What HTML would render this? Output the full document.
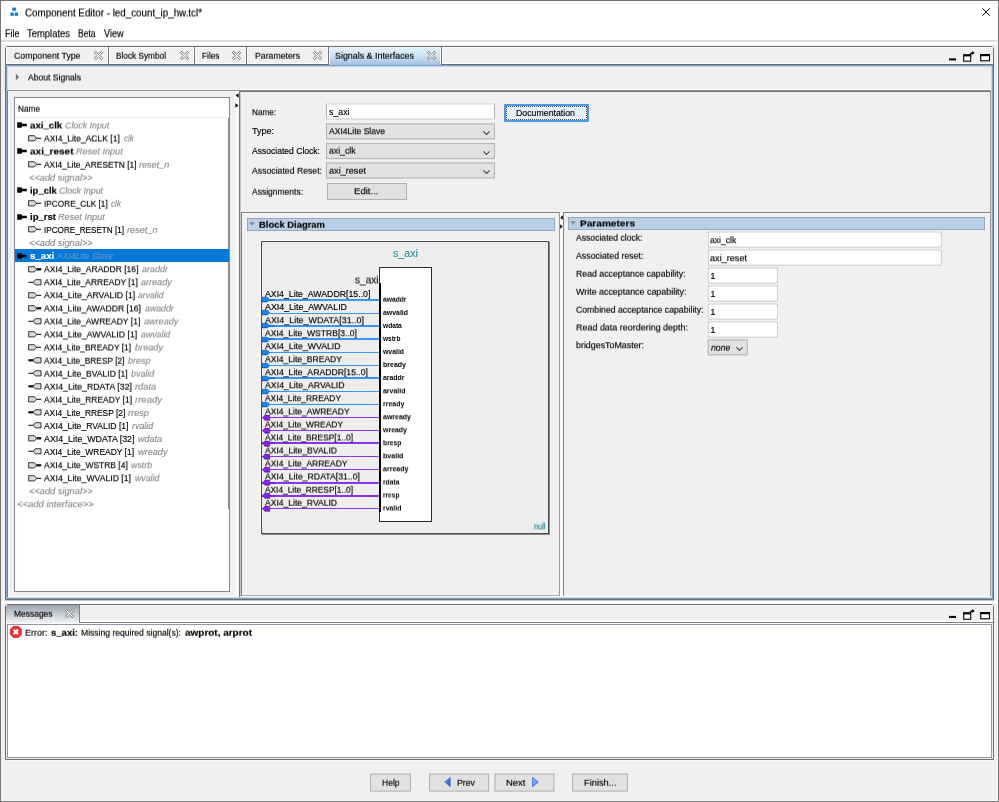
<!DOCTYPE html>
<html lang="en"><head><meta charset="utf-8"><title>Component Editor - led_count_ip_hw.tcl*</title>
<style>
html,body{margin:0;padding:0;}
body{width:999px;height:802px;overflow:hidden;background:#f0f0f0;font-family:"Liberation Sans",sans-serif;}
#win{position:relative;width:999px;height:802px;overflow:hidden;background:#f0f0f0;}
.a{position:absolute;}
.t{position:absolute;white-space:pre;line-height:14px;height:14px;font-size:9.4px;-webkit-text-stroke:0.16px currentColor;}
svg{position:absolute;overflow:visible;}
.tl{position:absolute;left:0;top:0;width:999px;height:802px;pointer-events:none;}

</style></head>
<body>
<div id="win">
<div class="a" style="left:0px;top:0px;width:999px;height:802px;background:#f0f0f0;"></div>
<div class="a" style="left:1px;top:1px;width:997px;height:40px;background:#ffffff;"></div>
<div class="a" style="left:1px;top:40px;width:997px;height:1px;background:#d9d9d9;"></div>
<div class="a" style="left:1px;top:41px;width:997px;height:1px;background:#e2e2e2;"></div>
<div class="a" style="left:1px;top:42px;width:997px;height:2px;background:#ffffff;"></div>
<div class="a" style="left:1px;top:44px;width:997px;height:1px;background:#f7f7f7;"></div>
<svg style="left:9.5px;top:7.3px" width="9" height="10" viewBox="0 0 9 10"><rect x="2.3" y="0.6" width="3.6" height="3" fill="#0a78d7"/><path d="M3 3.4 L5.4 3.4 L4.2 4.8 Z" fill="#0a78d7"/><rect x="0.5" y="5.6" width="3.3" height="3.2" fill="#0a78d7"/><rect x="4.7" y="5.6" width="3.3" height="3.2" fill="#0a78d7"/></svg>
<svg style="left:981px;top:7px" width="10" height="10" viewBox="0 0 10 10"><path d="M1.3 1.2 L8.9 8.8 M8.9 1.2 L1.3 8.8" stroke="#111" stroke-width="1.0" fill="none"/></svg>
<div class="a" style="left:5px;top:46px;width:989px;height:554px;border:1px solid #6e6e6e;box-sizing:border-box;border-radius:3px 3px 0 0;"></div>
<div class="a" style="left:6px;top:47px;width:987px;height:17px;background:#f0f0f0;"></div>
<div class="a" style="left:6px;top:47px;width:987px;height:1px;background:#fafafa;"></div>
<div class="a" style="left:6px;top:63px;width:987px;height:1px;background:#ffffff;"></div>
<div class="a" style="left:6px;top:64px;width:987px;height:1px;background:#6e6e6e;"></div>
<div class="a" style="left:329px;top:47px;width:112px;height:19px;background:linear-gradient(#e6f5fd,#cfe3f5 45%,#9ebde1);"></div>
<div class="a" style="left:107px;top:48px;width:1px;height:16px;background:#fbfbfb;"></div>
<div class="a" style="left:108px;top:47px;width:1px;height:17px;background:#757575;"></div>
<div class="a" style="left:109px;top:48px;width:1px;height:16px;background:#fbfbfb;"></div>
<div class="a" style="left:193px;top:48px;width:1px;height:16px;background:#fbfbfb;"></div>
<div class="a" style="left:194px;top:47px;width:1px;height:17px;background:#757575;"></div>
<div class="a" style="left:195px;top:48px;width:1px;height:16px;background:#fbfbfb;"></div>
<div class="a" style="left:245px;top:48px;width:1px;height:16px;background:#fbfbfb;"></div>
<div class="a" style="left:246px;top:47px;width:1px;height:17px;background:#757575;"></div>
<div class="a" style="left:247px;top:48px;width:1px;height:16px;background:#fbfbfb;"></div>
<div class="a" style="left:327px;top:48px;width:1px;height:16px;background:#fbfbfb;"></div>
<div class="a" style="left:328px;top:47px;width:1px;height:17px;background:#757575;"></div>
<div class="a" style="left:329px;top:48px;width:1px;height:16px;background:#fbfbfb;"></div>
<div class="a" style="left:440px;top:48px;width:1px;height:16px;background:#fbfbfb;"></div>
<div class="a" style="left:441px;top:47px;width:1px;height:17px;background:#757575;"></div>
<div class="a" style="left:442px;top:48px;width:1px;height:16px;background:#fbfbfb;"></div>
<div class="a" style="left:6px;top:48px;width:1px;height:16px;background:#fbfbfb;"></div>
<div class="a" style="left:6px;top:65px;width:987px;height:534px;border:1px solid #7da2ce;box-sizing:border-box;"></div>
<div class="a" style="left:7px;top:66px;width:985px;height:532px;border:1px solid #c4d6ea;box-sizing:border-box;"></div>
<svg style="left:93.5px;top:51.1px" width="9" height="9" viewBox="0 0 9 9"><path d="M1.6 0.4 L4.5 3 L7.4 0.4 L8.6 1.6 L6 4.5 L8.6 7.4 L7.4 8.6 L4.5 6 L1.6 8.6 L0.4 7.4 L3 4.5 L0.4 1.6 Z" fill="#ffffff" stroke="#6e6e6e" stroke-width="1.0" stroke-linejoin="round"/></svg>
<svg style="left:179.5px;top:51.1px" width="9" height="9" viewBox="0 0 9 9"><path d="M1.6 0.4 L4.5 3 L7.4 0.4 L8.6 1.6 L6 4.5 L8.6 7.4 L7.4 8.6 L4.5 6 L1.6 8.6 L0.4 7.4 L3 4.5 L0.4 1.6 Z" fill="#ffffff" stroke="#6e6e6e" stroke-width="1.0" stroke-linejoin="round"/></svg>
<svg style="left:231.8px;top:51.1px" width="9" height="9" viewBox="0 0 9 9"><path d="M1.6 0.4 L4.5 3 L7.4 0.4 L8.6 1.6 L6 4.5 L8.6 7.4 L7.4 8.6 L4.5 6 L1.6 8.6 L0.4 7.4 L3 4.5 L0.4 1.6 Z" fill="#ffffff" stroke="#6e6e6e" stroke-width="1.0" stroke-linejoin="round"/></svg>
<svg style="left:312.8px;top:51.1px" width="9" height="9" viewBox="0 0 9 9"><path d="M1.6 0.4 L4.5 3 L7.4 0.4 L8.6 1.6 L6 4.5 L8.6 7.4 L7.4 8.6 L4.5 6 L1.6 8.6 L0.4 7.4 L3 4.5 L0.4 1.6 Z" fill="#ffffff" stroke="#6e6e6e" stroke-width="1.0" stroke-linejoin="round"/></svg>
<svg style="left:426.8px;top:51.1px" width="9" height="9" viewBox="0 0 9 9"><path d="M1.6 0.4 L4.5 3 L7.4 0.4 L8.6 1.6 L6 4.5 L8.6 7.4 L7.4 8.6 L4.5 6 L1.6 8.6 L0.4 7.4 L3 4.5 L0.4 1.6 Z" fill="#ffffff" stroke="#6e6e6e" stroke-width="1.0" stroke-linejoin="round"/></svg>
<div class="a" style="left:949px;top:58px;width:7px;height:2px;background:#000;transform:translate(0.00px,0.40px);"></div>
<svg style="left:963px;top:52px" width="13" height="11" viewBox="0 0 13 11"><rect x="0.7" y="3.0" width="7.0" height="6.2" fill="#fff" stroke="#000" stroke-width="1.1"/><rect x="0.2" y="2.4" width="8.0" height="2" fill="#000"/><path d="M7.1 3.3 Q7.3 1.1 9.4 1.05" stroke="#000" stroke-width="1.4" fill="none"/><path d="M9.2 -0.9 L11.7 1 L9.2 2.9 Z" fill="#000"/></svg>
<svg style="left:980px;top:54px" width="11" height="9" viewBox="0 0 11 9"><rect x="0.7" y="0.6" width="8.8" height="6.2" fill="#fff" stroke="#000" stroke-width="1.1"/><rect x="0.2" y="0.1" width="9.8" height="2.1" fill="#000"/></svg>
<svg style="left:15px;top:73px" width="5" height="8" viewBox="0 0 5 8"><path d="M0.8 0.6 L4.2 4 L0.8 7.4 Z" fill="#7a7a7a"/></svg>
<div class="a" style="left:8px;top:89px;width:983px;height:1px;background:#ffffff;"></div>
<div class="a" style="left:8px;top:90px;width:983px;height:1px;background:#8e8e8e;"></div>
<div class="a" style="left:7px;top:91px;width:1px;height:506px;background:#76828f;"></div>
<div class="a" style="left:8px;top:91px;width:1px;height:506px;background:#f6f6f6;"></div>
<div class="a" style="left:8px;top:91px;width:227px;height:1px;background:#fbfbfb;"></div>
<div class="a" style="left:990px;top:91px;width:1px;height:506px;background:#9a9a9a;"></div>
<div class="a" style="left:241px;top:595px;width:319px;height:1px;background:#adadad;"></div>
<div class="a" style="left:8px;top:596px;width:983px;height:1px;background:#fafafa;"></div>
<div class="a" style="left:14px;top:97px;width:216px;height:495px;background:#ffffff;border:1px solid #828790;box-sizing:border-box;"></div>
<div class="a" style="left:15px;top:117px;width:214px;height:1px;background:#ececec;"></div>
<div class="a" style="left:228px;top:118px;width:1px;height:391px;background:#868d98;"></div>
<div class="a" style="left:239px;top:91px;width:1px;height:506px;background:#72767d;"></div>
<div class="a" style="left:240px;top:91px;width:1px;height:506px;background:#c4c6c9;"></div>
<div class="a" style="left:239px;top:91px;width:752px;height:1px;background:#72767d;"></div>
<div class="a" style="left:235px;top:91px;width:4px;height:506px;background:#fafafa;"></div>
<svg style="left:235px;top:93px" width="4" height="5" viewBox="0 0 4 5"><path d="M3.6 0.2 L3.6 4.8 L0.6 2.5 Z" fill="#000"/></svg>
<svg style="left:235px;top:103px" width="4" height="5" viewBox="0 0 4 5"><path d="M0.4 0.2 L0.4 4.8 L3.4 2.5 Z" fill="#000"/></svg>
<svg style="left:17.0px;top:122.07px" width="10" height="6" viewBox="0 0 10 6"><path d="M0.2 0.2 L4.4 0.2 L6.2 3 L4.4 5.8 L0.2 5.8 Z" fill="#000"/><rect x="5.3" y="1.75" width="4.5" height="2.5" fill="#000"/></svg>
<svg style="left:27.5px;top:134.935px" width="14" height="7" viewBox="0 0 14 7"><path d="M0.6 0.7 L6.4 0.7 L8.6 3.3 L6.4 5.9 L0.6 5.9 Z" fill="#d9d9d9" stroke="#222" stroke-width="0.9"/><rect x="8.6" y="2.775" width="4.6" height="1.05" fill="#111"/></svg>
<svg style="left:17.0px;top:148.2px" width="10" height="6" viewBox="0 0 10 6"><path d="M0.2 0.2 L4.4 0.2 L6.2 3 L4.4 5.8 L0.2 5.8 Z" fill="#000"/><rect x="5.3" y="1.75" width="4.5" height="2.5" fill="#000"/></svg>
<svg style="left:27.5px;top:161.065px" width="14" height="7" viewBox="0 0 14 7"><path d="M0.6 0.7 L6.4 0.7 L8.6 3.3 L6.4 5.9 L0.6 5.9 Z" fill="#d9d9d9" stroke="#222" stroke-width="0.9"/><rect x="8.6" y="2.775" width="4.6" height="1.05" fill="#111"/></svg>
<svg style="left:17.0px;top:187.39499999999998px" width="10" height="6" viewBox="0 0 10 6"><path d="M0.2 0.2 L4.4 0.2 L6.2 3 L4.4 5.8 L0.2 5.8 Z" fill="#000"/><rect x="5.3" y="1.75" width="4.5" height="2.5" fill="#000"/></svg>
<svg style="left:27.5px;top:200.26px" width="14" height="7" viewBox="0 0 14 7"><path d="M0.6 0.7 L6.4 0.7 L8.6 3.3 L6.4 5.9 L0.6 5.9 Z" fill="#d9d9d9" stroke="#222" stroke-width="0.9"/><rect x="8.6" y="2.775" width="4.6" height="1.05" fill="#111"/></svg>
<svg style="left:17.0px;top:213.52499999999998px" width="10" height="6" viewBox="0 0 10 6"><path d="M0.2 0.2 L4.4 0.2 L6.2 3 L4.4 5.8 L0.2 5.8 Z" fill="#000"/><rect x="5.3" y="1.75" width="4.5" height="2.5" fill="#000"/></svg>
<svg style="left:27.5px;top:226.39px" width="14" height="7" viewBox="0 0 14 7"><path d="M0.6 0.7 L6.4 0.7 L8.6 3.3 L6.4 5.9 L0.6 5.9 Z" fill="#d9d9d9" stroke="#222" stroke-width="0.9"/><rect x="8.6" y="2.775" width="4.6" height="1.05" fill="#111"/></svg>
<div class="a" style="left:15px;top:249px;width:214px;height:13px;background:#0078d7;"></div>
<svg style="left:17.0px;top:252.72px" width="10" height="6" viewBox="0 0 10 6"><path d="M0.2 0.2 L4.4 0.2 L6.2 3 L4.4 5.8 L0.2 5.8 Z" fill="#000"/><rect x="5.3" y="1.75" width="4.5" height="2.5" fill="#000"/></svg>
<svg style="left:27.5px;top:265.585px" width="14" height="7" viewBox="0 0 14 7"><path d="M0.6 0.7 L6.4 0.7 L8.6 3.3 L6.4 5.9 L0.6 5.9 Z" fill="#d9d9d9" stroke="#222" stroke-width="0.9"/><rect x="8.6" y="2.15" width="4.6" height="2.3" fill="#111"/></svg>
<svg style="left:27.5px;top:278.65000000000003px" width="14" height="7" viewBox="0 0 14 7"><rect x="0.4" y="2.775" width="5" height="1.05" fill="#111"/><path d="M13 0.7 L7.4 0.7 L5.2 3.3 L7.4 5.9 L13 5.9 Z" fill="#d9d9d9" stroke="#222" stroke-width="0.9"/></svg>
<svg style="left:27.5px;top:291.715px" width="14" height="7" viewBox="0 0 14 7"><path d="M0.6 0.7 L6.4 0.7 L8.6 3.3 L6.4 5.9 L0.6 5.9 Z" fill="#d9d9d9" stroke="#222" stroke-width="0.9"/><rect x="8.6" y="2.775" width="4.6" height="1.05" fill="#111"/></svg>
<svg style="left:27.5px;top:304.78000000000003px" width="14" height="7" viewBox="0 0 14 7"><path d="M0.6 0.7 L6.4 0.7 L8.6 3.3 L6.4 5.9 L0.6 5.9 Z" fill="#d9d9d9" stroke="#222" stroke-width="0.9"/><rect x="8.6" y="2.15" width="4.6" height="2.3" fill="#111"/></svg>
<svg style="left:27.5px;top:317.84499999999997px" width="14" height="7" viewBox="0 0 14 7"><rect x="0.4" y="2.775" width="5" height="1.05" fill="#111"/><path d="M13 0.7 L7.4 0.7 L5.2 3.3 L7.4 5.9 L13 5.9 Z" fill="#d9d9d9" stroke="#222" stroke-width="0.9"/></svg>
<svg style="left:27.5px;top:330.91px" width="14" height="7" viewBox="0 0 14 7"><path d="M0.6 0.7 L6.4 0.7 L8.6 3.3 L6.4 5.9 L0.6 5.9 Z" fill="#d9d9d9" stroke="#222" stroke-width="0.9"/><rect x="8.6" y="2.775" width="4.6" height="1.05" fill="#111"/></svg>
<svg style="left:27.5px;top:343.97499999999997px" width="14" height="7" viewBox="0 0 14 7"><path d="M0.6 0.7 L6.4 0.7 L8.6 3.3 L6.4 5.9 L0.6 5.9 Z" fill="#d9d9d9" stroke="#222" stroke-width="0.9"/><rect x="8.6" y="2.775" width="4.6" height="1.05" fill="#111"/></svg>
<svg style="left:27.5px;top:357.04px" width="14" height="7" viewBox="0 0 14 7"><rect x="0.4" y="2.15" width="5" height="2.3" fill="#111"/><path d="M13 0.7 L7.4 0.7 L5.2 3.3 L7.4 5.9 L13 5.9 Z" fill="#d9d9d9" stroke="#222" stroke-width="0.9"/></svg>
<svg style="left:27.5px;top:370.10499999999996px" width="14" height="7" viewBox="0 0 14 7"><rect x="0.4" y="2.775" width="5" height="1.05" fill="#111"/><path d="M13 0.7 L7.4 0.7 L5.2 3.3 L7.4 5.9 L13 5.9 Z" fill="#d9d9d9" stroke="#222" stroke-width="0.9"/></svg>
<svg style="left:27.5px;top:383.17px" width="14" height="7" viewBox="0 0 14 7"><rect x="0.4" y="2.15" width="5" height="2.3" fill="#111"/><path d="M13 0.7 L7.4 0.7 L5.2 3.3 L7.4 5.9 L13 5.9 Z" fill="#d9d9d9" stroke="#222" stroke-width="0.9"/></svg>
<svg style="left:27.5px;top:396.235px" width="14" height="7" viewBox="0 0 14 7"><path d="M0.6 0.7 L6.4 0.7 L8.6 3.3 L6.4 5.9 L0.6 5.9 Z" fill="#d9d9d9" stroke="#222" stroke-width="0.9"/><rect x="8.6" y="2.775" width="4.6" height="1.05" fill="#111"/></svg>
<svg style="left:27.5px;top:409.3px" width="14" height="7" viewBox="0 0 14 7"><rect x="0.4" y="2.15" width="5" height="2.3" fill="#111"/><path d="M13 0.7 L7.4 0.7 L5.2 3.3 L7.4 5.9 L13 5.9 Z" fill="#d9d9d9" stroke="#222" stroke-width="0.9"/></svg>
<svg style="left:27.5px;top:422.365px" width="14" height="7" viewBox="0 0 14 7"><rect x="0.4" y="2.775" width="5" height="1.05" fill="#111"/><path d="M13 0.7 L7.4 0.7 L5.2 3.3 L7.4 5.9 L13 5.9 Z" fill="#d9d9d9" stroke="#222" stroke-width="0.9"/></svg>
<svg style="left:27.5px;top:435.43px" width="14" height="7" viewBox="0 0 14 7"><path d="M0.6 0.7 L6.4 0.7 L8.6 3.3 L6.4 5.9 L0.6 5.9 Z" fill="#d9d9d9" stroke="#222" stroke-width="0.9"/><rect x="8.6" y="2.15" width="4.6" height="2.3" fill="#111"/></svg>
<svg style="left:27.5px;top:448.495px" width="14" height="7" viewBox="0 0 14 7"><rect x="0.4" y="2.775" width="5" height="1.05" fill="#111"/><path d="M13 0.7 L7.4 0.7 L5.2 3.3 L7.4 5.9 L13 5.9 Z" fill="#d9d9d9" stroke="#222" stroke-width="0.9"/></svg>
<svg style="left:27.5px;top:461.56px" width="14" height="7" viewBox="0 0 14 7"><path d="M0.6 0.7 L6.4 0.7 L8.6 3.3 L6.4 5.9 L0.6 5.9 Z" fill="#d9d9d9" stroke="#222" stroke-width="0.9"/><rect x="8.6" y="2.15" width="4.6" height="2.3" fill="#111"/></svg>
<svg style="left:27.5px;top:474.625px" width="14" height="7" viewBox="0 0 14 7"><path d="M0.6 0.7 L6.4 0.7 L8.6 3.3 L6.4 5.9 L0.6 5.9 Z" fill="#d9d9d9" stroke="#222" stroke-width="0.9"/><rect x="8.6" y="2.775" width="4.6" height="1.05" fill="#111"/></svg>
<div class="a" style="left:326px;top:103px;width:169px;height:16px;background:#ffffff;border:1px solid #adb1b9;box-sizing:border-box;border-bottom-color:#9da1a9;border-radius:1px;transform:translate(0.00px,0.50px);"></div>
<div class="a" style="left:326px;top:123px;width:169px;height:16px;background:#e1e1e1;border:1px solid #b2b2b2;box-sizing:border-box;transform:translate(0.00px,0.40px);"></div>
<svg style="left:482.9px;top:131.0px" width="7" height="4" viewBox="0 0 7 4"><path d="M0.4 0.4 L3.5 3.5 L6.6 0.4" fill="none" stroke="#454545" stroke-width="1.1"/></svg>
<div class="a" style="left:326px;top:143px;width:169px;height:16px;background:#e1e1e1;border:1px solid #b2b2b2;box-sizing:border-box;transform:translate(0.00px,0.10px);"></div>
<svg style="left:482.9px;top:150.7px" width="7" height="4" viewBox="0 0 7 4"><path d="M0.4 0.4 L3.5 3.5 L6.6 0.4" fill="none" stroke="#454545" stroke-width="1.1"/></svg>
<div class="a" style="left:326px;top:162px;width:169px;height:16px;background:#e1e1e1;border:1px solid #b2b2b2;box-sizing:border-box;transform:translate(0.00px,0.50px);"></div>
<svg style="left:482.9px;top:170.1px" width="7" height="4" viewBox="0 0 7 4"><path d="M0.4 0.4 L3.5 3.5 L6.6 0.4" fill="none" stroke="#454545" stroke-width="1.1"/></svg>
<div class="a" style="left:327px;top:182.5px;width:80px;height:17px;background:#e1e1e1;border:1px solid #b2b2b2;box-sizing:border-box;"></div>
<div class="a" style="left:504px;top:104px;width:85px;height:18px;background:#e5f1fb;border:2px solid #4a98e6;box-sizing:border-box;border-radius:1px;"></div>
<div class="a" style="left:506px;top:106px;width:81px;height:14px;border:1px dotted #4a4a4a;box-sizing:border-box;"></div>
<div class="a" style="left:241px;top:212px;width:319px;height:1px;background:#808080;"></div>
<div class="a" style="left:241px;top:212px;width:1px;height:384px;background:#808080;"></div>
<div class="a" style="left:559px;top:212px;width:1px;height:384px;background:#9a9a9a;"></div>
<div class="a" style="left:563px;top:212px;width:427px;height:1px;background:#808080;"></div>
<div class="a" style="left:564px;top:213px;width:426px;height:1px;background:#f8f8f8;"></div>
<div class="a" style="left:242px;top:213px;width:317px;height:1px;background:#f8f8f8;"></div>
<div class="a" style="left:563px;top:212px;width:1px;height:384px;background:#808080;"></div>
<div class="a" style="left:560px;top:213px;width:3px;height:384px;background:#fcfcfc;"></div>
<svg style="left:560px;top:215px" width="3" height="5" viewBox="0 0 3 5"><path d="M2.8 0.2 L2.8 4.8 L0.3 2.5 Z" fill="#000"/></svg>
<svg style="left:560px;top:224px" width="3" height="5" viewBox="0 0 3 5"><path d="M0.2 0.2 L0.2 4.8 L2.7 2.5 Z" fill="#000"/></svg>
<div class="a" style="left:247px;top:218px;width:308px;height:13px;background:#b9cfe7;border:1px solid #9aa7b5;box-sizing:border-box;"></div>
<svg style="left:249px;top:221.5px" width="6" height="4" viewBox="0 0 6 4"><path d="M0.2 0.3 L5.8 0.3 L3 3.8 Z" fill="#7f8b99"/></svg>
<div class="a" style="left:568px;top:217px;width:417px;height:13px;background:#b9cfe7;border:1px solid #9aa7b5;box-sizing:border-box;"></div>
<svg style="left:570px;top:220.5px" width="6" height="4" viewBox="0 0 6 4"><path d="M0.2 0.3 L5.8 0.3 L3 3.8 Z" fill="#7f8b99"/></svg>
<div class="a" style="left:260px;top:240px;width:289px;height:1px;background:#fcfcfc;"></div>
<div class="a" style="left:260px;top:240px;width:1px;height:294px;background:#fcfcfc;"></div>
<div class="a" style="left:261px;top:241px;width:288px;height:293px;background:#eeeeee;border:1px solid #4a4a4a;box-sizing:border-box;"></div>
<div class="a" style="left:262px;top:534px;width:288px;height:1px;background:#8a8a8a;"></div>
<div class="a" style="left:549px;top:242px;width:1px;height:293px;background:#8a8a8a;"></div>
<div class="a" style="left:379px;top:267px;width:53px;height:254.5px;background:#ffffff;border:1px solid #2a2a2a;box-sizing:border-box;"></div>
<div class="a" style="left:379px;top:283px;width:2px;height:229px;background:#000;"></div>
<div class="a" style="left:262px;top:299px;width:117px;height:2px;background:#3a96f2;"></div>
<div class="a" style="left:262px;top:299px;width:13px;height:2px;background:#1a7ae6;"></div>
<svg style="left:262px;top:297.40px" width="9" height="6" viewBox="0 0 9 6"><path d="M0 0.1 L5.4 0.1 L7.8 2.6 L5.4 5.1 L0 5.1 Z" fill="#1b84f0" stroke="#2b4f86" stroke-width="0.35"/><path d="M0 4.3 L5.8 4.3 L5.2 5.1 L0 5.1 Z" fill="#0a58c8"/></svg>
<div class="a" style="left:262px;top:313px;width:117px;height:1px;background:#3a96f2;"></div>
<svg style="left:262px;top:310.44px" width="9" height="6" viewBox="0 0 9 6"><path d="M0 0.1 L5.4 0.1 L7.8 2.6 L5.4 5.1 L0 5.1 Z" fill="#1b84f0" stroke="#2b4f86" stroke-width="0.35"/><path d="M0 4.3 L5.8 4.3 L5.2 5.1 L0 5.1 Z" fill="#0a58c8"/></svg>
<div class="a" style="left:262px;top:325px;width:117px;height:2px;background:#3a96f2;"></div>
<div class="a" style="left:262px;top:325px;width:13px;height:2px;background:#1a7ae6;"></div>
<svg style="left:262px;top:323.48px" width="9" height="6" viewBox="0 0 9 6"><path d="M0 0.1 L5.4 0.1 L7.8 2.6 L5.4 5.1 L0 5.1 Z" fill="#1b84f0" stroke="#2b4f86" stroke-width="0.35"/><path d="M0 4.3 L5.8 4.3 L5.2 5.1 L0 5.1 Z" fill="#0a58c8"/></svg>
<div class="a" style="left:262px;top:338px;width:117px;height:2px;background:#3a96f2;"></div>
<div class="a" style="left:262px;top:338px;width:13px;height:2px;background:#1a7ae6;"></div>
<svg style="left:262px;top:336.52px" width="9" height="6" viewBox="0 0 9 6"><path d="M0 0.1 L5.4 0.1 L7.8 2.6 L5.4 5.1 L0 5.1 Z" fill="#1b84f0" stroke="#2b4f86" stroke-width="0.35"/><path d="M0 4.3 L5.8 4.3 L5.2 5.1 L0 5.1 Z" fill="#0a58c8"/></svg>
<div class="a" style="left:262px;top:352px;width:117px;height:1px;background:#3a96f2;"></div>
<svg style="left:262px;top:349.56px" width="9" height="6" viewBox="0 0 9 6"><path d="M0 0.1 L5.4 0.1 L7.8 2.6 L5.4 5.1 L0 5.1 Z" fill="#1b84f0" stroke="#2b4f86" stroke-width="0.35"/><path d="M0 4.3 L5.8 4.3 L5.2 5.1 L0 5.1 Z" fill="#0a58c8"/></svg>
<div class="a" style="left:262px;top:365px;width:117px;height:1px;background:#3a96f2;"></div>
<svg style="left:262px;top:362.60px" width="9" height="6" viewBox="0 0 9 6"><path d="M0 0.1 L5.4 0.1 L7.8 2.6 L5.4 5.1 L0 5.1 Z" fill="#1b84f0" stroke="#2b4f86" stroke-width="0.35"/><path d="M0 4.3 L5.8 4.3 L5.2 5.1 L0 5.1 Z" fill="#0a58c8"/></svg>
<div class="a" style="left:262px;top:377px;width:117px;height:2px;background:#3a96f2;"></div>
<div class="a" style="left:262px;top:377px;width:13px;height:2px;background:#1a7ae6;"></div>
<svg style="left:262px;top:375.64px" width="9" height="6" viewBox="0 0 9 6"><path d="M0 0.1 L5.4 0.1 L7.8 2.6 L5.4 5.1 L0 5.1 Z" fill="#1b84f0" stroke="#2b4f86" stroke-width="0.35"/><path d="M0 4.3 L5.8 4.3 L5.2 5.1 L0 5.1 Z" fill="#0a58c8"/></svg>
<div class="a" style="left:262px;top:391px;width:117px;height:1px;background:#3a96f2;"></div>
<svg style="left:262px;top:388.68px" width="9" height="6" viewBox="0 0 9 6"><path d="M0 0.1 L5.4 0.1 L7.8 2.6 L5.4 5.1 L0 5.1 Z" fill="#1b84f0" stroke="#2b4f86" stroke-width="0.35"/><path d="M0 4.3 L5.8 4.3 L5.2 5.1 L0 5.1 Z" fill="#0a58c8"/></svg>
<div class="a" style="left:262px;top:404px;width:117px;height:1px;background:#3a96f2;"></div>
<svg style="left:262px;top:401.72px" width="9" height="6" viewBox="0 0 9 6"><path d="M0 0.1 L5.4 0.1 L7.8 2.6 L5.4 5.1 L0 5.1 Z" fill="#1b84f0" stroke="#2b4f86" stroke-width="0.35"/><path d="M0 4.3 L5.8 4.3 L5.2 5.1 L0 5.1 Z" fill="#0a58c8"/></svg>
<div class="a" style="left:262px;top:417px;width:117px;height:1px;background:#8f33e6;"></div>
<svg style="left:262px;top:414.66px" width="9" height="6" viewBox="0 0 9 6"><path d="M7.8 0.1 L2.8 0.1 L0.5 2.7 L2.8 5.3 L7.8 5.3 Z" fill="#8426e8" stroke="#3a2a5a" stroke-width="0.35"/><path d="M2.2 4.5 L7.8 4.5 L7.8 5.3 L2.8 5.3 Z" fill="#5a10b8"/></svg>
<div class="a" style="left:262px;top:430px;width:117px;height:1px;background:#8f33e6;"></div>
<svg style="left:262px;top:427.70px" width="9" height="6" viewBox="0 0 9 6"><path d="M7.8 0.1 L2.8 0.1 L0.5 2.7 L2.8 5.3 L7.8 5.3 Z" fill="#8426e8" stroke="#3a2a5a" stroke-width="0.35"/><path d="M2.2 4.5 L7.8 4.5 L7.8 5.3 L2.8 5.3 Z" fill="#5a10b8"/></svg>
<div class="a" style="left:262px;top:442px;width:117px;height:2px;background:#8f33e6;"></div>
<div class="a" style="left:262px;top:442px;width:13px;height:2px;background:#7a1fe0;"></div>
<svg style="left:262px;top:440.74px" width="9" height="6" viewBox="0 0 9 6"><path d="M7.8 0.1 L2.8 0.1 L0.5 2.7 L2.8 5.3 L7.8 5.3 Z" fill="#8426e8" stroke="#3a2a5a" stroke-width="0.35"/><path d="M2.2 4.5 L7.8 4.5 L7.8 5.3 L2.8 5.3 Z" fill="#5a10b8"/></svg>
<div class="a" style="left:262px;top:456px;width:117px;height:1px;background:#8f33e6;"></div>
<svg style="left:262px;top:453.78px" width="9" height="6" viewBox="0 0 9 6"><path d="M7.8 0.1 L2.8 0.1 L0.5 2.7 L2.8 5.3 L7.8 5.3 Z" fill="#8426e8" stroke="#3a2a5a" stroke-width="0.35"/><path d="M2.2 4.5 L7.8 4.5 L7.8 5.3 L2.8 5.3 Z" fill="#5a10b8"/></svg>
<div class="a" style="left:262px;top:469px;width:117px;height:1px;background:#8f33e6;"></div>
<svg style="left:262px;top:466.82px" width="9" height="6" viewBox="0 0 9 6"><path d="M7.8 0.1 L2.8 0.1 L0.5 2.7 L2.8 5.3 L7.8 5.3 Z" fill="#8426e8" stroke="#3a2a5a" stroke-width="0.35"/><path d="M2.2 4.5 L7.8 4.5 L7.8 5.3 L2.8 5.3 Z" fill="#5a10b8"/></svg>
<div class="a" style="left:262px;top:482px;width:117px;height:2px;background:#8f33e6;"></div>
<div class="a" style="left:262px;top:482px;width:13px;height:2px;background:#7a1fe0;"></div>
<svg style="left:262px;top:479.86px" width="9" height="6" viewBox="0 0 9 6"><path d="M7.8 0.1 L2.8 0.1 L0.5 2.7 L2.8 5.3 L7.8 5.3 Z" fill="#8426e8" stroke="#3a2a5a" stroke-width="0.35"/><path d="M2.2 4.5 L7.8 4.5 L7.8 5.3 L2.8 5.3 Z" fill="#5a10b8"/></svg>
<div class="a" style="left:262px;top:495px;width:117px;height:2px;background:#8f33e6;"></div>
<div class="a" style="left:262px;top:495px;width:13px;height:2px;background:#7a1fe0;"></div>
<svg style="left:262px;top:492.90px" width="9" height="6" viewBox="0 0 9 6"><path d="M7.8 0.1 L2.8 0.1 L0.5 2.7 L2.8 5.3 L7.8 5.3 Z" fill="#8426e8" stroke="#3a2a5a" stroke-width="0.35"/><path d="M2.2 4.5 L7.8 4.5 L7.8 5.3 L2.8 5.3 Z" fill="#5a10b8"/></svg>
<div class="a" style="left:262px;top:508px;width:117px;height:1px;background:#8f33e6;"></div>
<svg style="left:262px;top:505.94px" width="9" height="6" viewBox="0 0 9 6"><path d="M7.8 0.1 L2.8 0.1 L0.5 2.7 L2.8 5.3 L7.8 5.3 Z" fill="#8426e8" stroke="#3a2a5a" stroke-width="0.35"/><path d="M2.2 4.5 L7.8 4.5 L7.8 5.3 L2.8 5.3 Z" fill="#5a10b8"/></svg>
<div class="a" style="left:707px;top:231px;width:234px;height:16px;background:#ffffff;border:1px solid #adb1b9;box-sizing:border-box;border-bottom-color:#9da1a9;border-radius:1px;transform:translate(0.70px,0.60px);"></div>
<div class="a" style="left:707px;top:249px;width:234px;height:16px;background:#ffffff;border:1px solid #adb1b9;box-sizing:border-box;border-bottom-color:#9da1a9;border-radius:1px;transform:translate(0.70px,0.60px);"></div>
<div class="a" style="left:707px;top:267px;width:70px;height:16px;background:#ffffff;border:1px solid #adb1b9;box-sizing:border-box;border-bottom-color:#9da1a9;border-radius:1px;transform:translate(0.70px,0.60px);"></div>
<div class="a" style="left:707px;top:285px;width:70px;height:16px;background:#ffffff;border:1px solid #adb1b9;box-sizing:border-box;border-bottom-color:#9da1a9;border-radius:1px;transform:translate(0.70px,0.60px);"></div>
<div class="a" style="left:707px;top:303px;width:70px;height:16px;background:#ffffff;border:1px solid #adb1b9;box-sizing:border-box;border-bottom-color:#9da1a9;border-radius:1px;transform:translate(0.70px,0.60px);"></div>
<div class="a" style="left:707px;top:321px;width:70px;height:16px;background:#ffffff;border:1px solid #adb1b9;box-sizing:border-box;border-bottom-color:#9da1a9;border-radius:1px;transform:translate(0.70px,0.60px);"></div>
<div class="a" style="left:707px;top:339px;width:40px;height:16px;background:#e1e1e1;border:1px solid #b2b2b2;box-sizing:border-box;transform:translate(0.70px,0.40px);"></div>
<svg style="left:735.9px;top:347px" width="7" height="4" viewBox="0 0 7 4"><path d="M0.4 0.4 L3.5 3.5 L6.6 0.4" fill="none" stroke="#454545" stroke-width="1.1"/></svg>
<div class="a" style="left:5px;top:600px;width:989px;height:1px;background:#c4c4c4;"></div>
<div class="a" style="left:2px;top:601px;width:995px;height:3px;background:#fdfdfd;"></div>
<div class="a" style="left:5px;top:604px;width:989px;height:156px;border:1px solid #6e6e6e;box-sizing:border-box;border-radius:3px 3px 0 0;"></div>
<div class="a" style="left:6px;top:605px;width:987px;height:17px;background:#f0f0f0;"></div>
<div class="a" style="left:6px;top:605px;width:987px;height:1px;background:#fbfbfb;"></div>
<div class="a" style="left:79px;top:620px;width:914px;height:2px;background:#fbfbfb;"></div>
<div class="a" style="left:6px;top:760px;width:987px;height:1px;background:#fafafa;"></div>
<div class="a" style="left:6px;top:605px;width:73px;height:18px;background:linear-gradient(#98a2ae,#c3c9d0 45%,#f1f2f3);border-radius:2px 0 0 0;"></div>
<div class="a" style="left:79px;top:605px;width:1px;height:17px;background:#808080;"></div>
<div class="a" style="left:79px;top:622px;width:914px;height:1px;background:#808080;"></div>
<div class="a" style="left:6px;top:623px;width:987px;height:1px;background:#fdfdfd;"></div>
<svg style="left:64.8px;top:608.7px" width="9" height="9" viewBox="0 0 9 9"><path d="M1.6 0.4 L4.5 3 L7.4 0.4 L8.6 1.6 L6 4.5 L8.6 7.4 L7.4 8.6 L4.5 6 L1.6 8.6 L0.4 7.4 L3 4.5 L0.4 1.6 Z" fill="#ffffff" stroke="#6e6e6e" stroke-width="1.0" stroke-linejoin="round"/></svg>
<div class="a" style="left:949px;top:615px;width:7px;height:2px;background:#000;transform:translate(0.00px,0.90px);"></div>
<svg style="left:963px;top:609.5px" width="13" height="11" viewBox="0 0 13 11"><rect x="0.7" y="3.0" width="7.0" height="6.2" fill="#fff" stroke="#000" stroke-width="1.1"/><rect x="0.2" y="2.4" width="8.0" height="2" fill="#000"/><path d="M7.1 3.3 Q7.3 1.1 9.4 1.05" stroke="#000" stroke-width="1.4" fill="none"/><path d="M9.2 -0.9 L11.7 1 L9.2 2.9 Z" fill="#000"/></svg>
<svg style="left:980px;top:611.5px" width="11" height="9" viewBox="0 0 11 9"><rect x="0.7" y="0.6" width="8.8" height="6.2" fill="#fff" stroke="#000" stroke-width="1.1"/><rect x="0.2" y="0.1" width="9.8" height="2.1" fill="#000"/></svg>
<div class="a" style="left:7px;top:624px;width:985px;height:134px;background:#ffffff;border:1px solid #8e97a3;box-sizing:border-box;"></div>
<svg style="left:10px;top:626px" width="12" height="12" viewBox="0 0 12 12"><path d="M3.4 0.3 L8.2 0.3 L11.3 3.4 L11.3 8.4 L8.2 11.5 L3.4 11.5 L0.3 8.4 L0.3 3.4 Z" fill="#f42a2e" stroke="#e82026" stroke-width="0.8" stroke-linejoin="round"/><path d="M3.5 3.6 L8.1 8.2 M8.1 3.6 L3.5 8.2" stroke="#fff" stroke-width="2.1"/></svg>
<div class="a" style="left:370px;top:773px;width:41px;height:18px;background:#e1e1e1;border:1px solid #b2b2b2;box-sizing:border-box;transform:translate(0.00px,0.60px);"></div>
<div class="a" style="left:429px;top:773px;width:60px;height:18px;background:#e1e1e1;border:1px solid #b2b2b2;box-sizing:border-box;transform:translate(0.00px,0.60px);"></div>
<div class="a" style="left:494px;top:773px;width:60px;height:18px;background:#e1e1e1;border:1px solid #b2b2b2;box-sizing:border-box;transform:translate(0.50px,0.60px);"></div>
<div class="a" style="left:572px;top:773px;width:56px;height:18px;background:#e1e1e1;border:1px solid #b2b2b2;box-sizing:border-box;transform:translate(0.00px,0.60px);"></div>
<svg style="left:444.4px;top:777.4px" width="7" height="10" viewBox="0 0 7 10"><defs><linearGradient id="gp" x1="0" y1="0" x2="1" y2="1"><stop offset="0" stop-color="#6aa8f6"/><stop offset="1" stop-color="#1a52c4"/></linearGradient></defs><path d="M6.4 0.3 L6.4 9.7 L0.5 5 Z" fill="url(#gp)" stroke="#2a64d0" stroke-width="0.4"/></svg>
<svg style="left:531.6px;top:777.4px" width="7" height="10" viewBox="0 0 7 10"><defs><linearGradient id="gn" x1="0" y1="0" x2="1" y2="1"><stop offset="0" stop-color="#9ccaff"/><stop offset="1" stop-color="#3a7ae6"/></linearGradient></defs><path d="M0.6 0.4 L0.6 9.6 L6.2 5 Z" fill="url(#gn)" stroke="#2a66d6" stroke-width="0.8"/></svg>
<div class="tl" style="will-change:transform;transform:matrix(1,0,0.00001,1,0,0);transform-origin:0 0">
<span class="t" id="t25" style="top:210px;font-size:9.4px;color:#000;left:29.50px;font-weight:bold;transform:scaleX(1.0184);transform-origin:left center;">ip_rst</span>
<span class="t" id="t26" style="top:210px;font-size:9.4px;color:#8c8c8c;left:58.30px;font-style:italic;transform:scaleX(0.9749);transform-origin:left center;">Reset Input</span>
<span class="t" id="t27" style="top:223px;font-size:9.4px;color:#000;left:43.75px;transform:scaleX(0.8675);transform-origin:left center;">IPCORE_RESETN [1]</span>
<span class="t" id="t28" style="top:223px;font-size:9.4px;color:#8c8c8c;left:127.00px;font-style:italic;transform:scaleX(0.9750);transform-origin:left center;">reset_n</span>
<span class="t" id="t29" style="top:236px;font-size:9.4px;color:#8c8c8c;left:29.25px;font-style:italic;transform:scaleX(0.9860);transform-origin:left center;">&lt;&lt;add signal&gt;&gt;</span>
<span class="t" id="t30" style="top:249px;font-size:9.4px;color:#fff;left:29.50px;font-weight:bold;transform:scaleX(1.0333);transform-origin:left center;">s_axi</span>
<span class="t" id="t31" style="top:249px;font-size:9.4px;color:#6593c8;left:56.55px;font-style:italic;transform:scaleX(0.9106);transform-origin:left center;">AXI4Lite Slave</span>
<span class="t" id="t54" style="top:406px;font-size:9.4px;color:#000;left:43.75px;transform:scaleX(0.8925);transform-origin:left center;">AXI4_Lite_RRESP [2]</span>
<span class="t" id="t55" style="top:406px;font-size:9.4px;color:#8c8c8c;left:128.25px;font-style:italic;transform:scaleX(0.9832);transform-origin:left center;">rresp</span>
<span class="t" id="t56" style="top:419px;font-size:9.4px;color:#000;left:43.75px;transform:scaleX(0.9194);transform-origin:left center;">AXI4_Lite_RVALID [1]</span>
<span class="t" id="t57" style="top:419px;font-size:9.4px;color:#8c8c8c;left:131.75px;font-style:italic;transform:scaleX(0.9484);transform-origin:left center;">rvalid</span>
<span class="t" id="t58" style="top:432px;font-size:9.4px;color:#000;left:43.75px;transform:scaleX(0.9421);transform-origin:left center;">AXI4_Lite_WDATA [32]</span>
<span class="t" id="t59" style="top:432px;font-size:9.4px;color:#8c8c8c;left:138.00px;font-style:italic;transform:scaleX(0.9588);transform-origin:left center;">wdata</span>
<span class="t" id="t60" style="top:445px;font-size:9.4px;color:#000;left:43.75px;transform:scaleX(0.9011);transform-origin:left center;">AXI4_Lite_WREADY [1]</span>
<span class="t" id="t61" style="top:445px;font-size:9.4px;color:#8c8c8c;left:137.50px;font-style:italic;transform:scaleX(0.9757);transform-origin:left center;">wready</span>
<span class="t" id="t69" style="top:124px;font-size:9.4px;color:#000;left:252.00px;transform:scaleX(0.9591);transform-origin:left center;">Type:</span>
<span class="t" id="t70" style="top:144px;font-size:9.4px;color:#000;left:252.00px;transform:scaleX(0.9126);transform-origin:left center;">Associated Clock:</span>
<span class="t" id="t73" style="top:105px;font-size:9.4px;color:#000;left:328.75px;transform:scaleX(0.9365);transform-origin:left center;">s_axi</span>
<span class="t" id="t78" style="top:106px;font-size:9.4px;color:#000;left:515.75px;transform:scaleX(0.9356);transform-origin:left center;">Documentation</span>
<span class="t" id="t81" style="top:247px;font-size:10.2px;color:#2a9697;left:392.50px;transform:scaleX(1.0506);transform-origin:left center;">s_axi</span>
<span class="t" id="t84" style="top:287px;font-size:8.9px;color:#000;left:264.60px;transform:scaleX(0.9861);transform-origin:left center;">AXI4_Lite_AWADDR[15..0]</span>
<span class="t" id="t86" style="top:300px;font-size:8.9px;color:#000;left:264.60px;transform:scaleX(0.9953);transform-origin:left center;">AXI4_Lite_AWVALID</span>
<span class="t" id="t87" style="top:306px;font-size:7.8px;color:#000;left:382.60px;font-weight:bold;-webkit-text-stroke:0;transform:scaleX(0.8874);transform-origin:left center;">awvalid</span>
<span class="t" id="t89" style="top:319px;font-size:7.8px;color:#000;left:382.60px;font-weight:bold;-webkit-text-stroke:0;transform:scaleX(0.8503);transform-origin:left center;">wdata</span>
<span class="t" id="t91" style="top:332px;font-size:7.8px;color:#000;left:382.60px;font-weight:bold;-webkit-text-stroke:0;transform:scaleX(0.8367);transform-origin:left center;">wstrb</span>
<span class="t" id="t93" style="top:345px;font-size:7.8px;color:#000;left:382.60px;font-weight:bold;-webkit-text-stroke:0;transform:scaleX(0.8807);transform-origin:left center;">wvalid</span>
<span class="t" id="t95" style="top:358px;font-size:7.8px;color:#000;left:382.60px;font-weight:bold;-webkit-text-stroke:0;transform:scaleX(0.8992);transform-origin:left center;">bready</span>
<span class="t" id="t97" style="top:371px;font-size:7.8px;color:#000;left:382.60px;font-weight:bold;-webkit-text-stroke:0;transform:scaleX(0.8813);transform-origin:left center;">araddr</span>
<span class="t" id="t127" style="top:269px;font-size:9.4px;color:#000;left:710.30px;">1</span>
<span class="t" id="t128" style="top:287px;font-size:9.4px;color:#000;left:710.30px;">1</span>
<span class="t" id="t129" style="top:305px;font-size:9.4px;color:#000;left:710.30px;">1</span>
<span class="t" id="t130" style="top:323px;font-size:9.4px;color:#000;left:710.30px;">1</span>
</div>
<div class="tl" style="will-change:transform;transform:matrix(1,0,0.00001,1,0,0.25);transform-origin:0 0">
<span class="t" id="t1" style="top:27px;font-size:10.4px;color:#000;left:4.50px;transform:scaleX(0.8657);transform-origin:left center;">File</span>
<span class="t" id="t2" style="top:27px;font-size:10.4px;color:#000;left:27.00px;transform:scaleX(0.9079);transform-origin:left center;">Templates</span>
<span class="t" id="t3" style="top:27px;font-size:10.4px;color:#000;left:78.00px;transform:scaleX(0.8187);transform-origin:left center;">Beta</span>
<span class="t" id="t4" style="top:27px;font-size:10.4px;color:#000;left:103.50px;transform:scaleX(0.8727);transform-origin:left center;">View</span>
<span class="t" id="t32" style="top:262px;font-size:9.4px;color:#000;left:43.75px;transform:scaleX(0.9113);transform-origin:left center;">AXI4_Lite_ARADDR [16]</span>
<span class="t" id="t33" style="top:262px;font-size:9.4px;color:#8c8c8c;left:142.00px;font-style:italic;transform:scaleX(0.9591);transform-origin:left center;">araddr</span>
<span class="t" id="t34" style="top:275px;font-size:9.4px;color:#000;left:43.75px;transform:scaleX(0.9009);transform-origin:left center;">AXI4_Lite_ARREADY [1]</span>
<span class="t" id="t35" style="top:275px;font-size:9.4px;color:#8c8c8c;left:141.25px;font-style:italic;transform:scaleX(0.9671);transform-origin:left center;">arready</span>
<span class="t" id="t36" style="top:288px;font-size:9.4px;color:#000;left:43.75px;transform:scaleX(0.9296);transform-origin:left center;">AXI4_Lite_ARVALID [1]</span>
<span class="t" id="t37" style="top:288px;font-size:9.4px;color:#8c8c8c;left:138.25px;font-style:italic;transform:scaleX(0.9231);transform-origin:left center;">arvalid</span>
<span class="t" id="t62" style="top:458px;font-size:9.4px;color:#000;left:43.75px;transform:scaleX(0.9030);transform-origin:left center;">AXI4_Lite_WSTRB [4]</span>
<span class="t" id="t63" style="top:458px;font-size:9.4px;color:#8c8c8c;left:131.25px;font-style:italic;transform:scaleX(0.9484);transform-origin:left center;">wstrb</span>
<span class="t" id="t64" style="top:471px;font-size:9.4px;color:#000;left:43.75px;transform:scaleX(0.9240);transform-origin:left center;">AXI4_Lite_WVALID [1]</span>
<span class="t" id="t65" style="top:471px;font-size:9.4px;color:#8c8c8c;left:134.50px;font-style:italic;transform:scaleX(0.9305);transform-origin:left center;">wvalid</span>
<span class="t" id="t66" style="top:484px;font-size:9.4px;color:#8c8c8c;left:29.25px;font-style:italic;transform:scaleX(0.9860);transform-origin:left center;">&lt;&lt;add signal&gt;&gt;</span>
<span class="t" id="t67" style="top:497px;font-size:9.4px;color:#8c8c8c;left:17.00px;font-style:italic;transform:scaleX(1.0084);transform-origin:left center;">&lt;&lt;add interface&gt;&gt;</span>
<span class="t" id="t68" style="top:105px;font-size:9.4px;color:#000;left:252.00px;transform:scaleX(0.8688);transform-origin:left center;">Name:</span>
<span class="t" id="t74" style="top:124px;font-size:9.4px;color:#000;left:329.00px;transform:scaleX(0.9106);transform-origin:left center;">AXI4Lite Slave</span>
<span class="t" id="t77" style="top:184px;font-size:9.4px;color:#000;left:354.25px;transform:scaleX(1.0222);transform-origin:left center;">Edit...</span>
<span class="t" id="t88" style="top:313px;font-size:8.9px;color:#000;left:264.60px;transform:scaleX(1.0017);transform-origin:left center;">AXI4_Lite_WDATA[31..0]</span>
<span class="t" id="t90" style="top:326px;font-size:8.9px;color:#000;left:264.60px;transform:scaleX(0.9664);transform-origin:left center;">AXI4_Lite_WSTRB[3..0]</span>
<span class="t" id="t92" style="top:339px;font-size:8.9px;color:#000;left:264.60px;transform:scaleX(0.9844);transform-origin:left center;">AXI4_Lite_WVALID</span>
<span class="t" id="t94" style="top:352px;font-size:8.9px;color:#000;left:264.60px;transform:scaleX(0.9634);transform-origin:left center;">AXI4_Lite_BREADY</span>
<span class="t" id="t96" style="top:365px;font-size:8.9px;color:#000;left:264.60px;transform:scaleX(0.9756);transform-origin:left center;">AXI4_Lite_ARADDR[15..0]</span>
<span class="t" id="t98" style="top:378px;font-size:8.9px;color:#000;left:264.60px;transform:scaleX(0.9877);transform-origin:left center;">AXI4_Lite_ARVALID</span>
<span class="t" id="t99" style="top:384px;font-size:7.8px;color:#000;left:382.60px;font-weight:bold;-webkit-text-stroke:0;transform:scaleX(0.8910);transform-origin:left center;">arvalid</span>
<span class="t" id="t100" style="top:391px;font-size:8.9px;color:#000;left:264.60px;transform:scaleX(0.9450);transform-origin:left center;">AXI4_Lite_RREADY</span>
<span class="t" id="t101" style="top:397px;font-size:7.8px;color:#000;left:382.60px;font-weight:bold;-webkit-text-stroke:0;transform:scaleX(0.8975);transform-origin:left center;">rready</span>
<span class="t" id="t103" style="top:410px;font-size:7.8px;color:#000;left:382.60px;font-weight:bold;-webkit-text-stroke:0;transform:scaleX(0.8969);transform-origin:left center;">awready</span>
<span class="t" id="t105" style="top:423px;font-size:7.8px;color:#000;left:382.60px;font-weight:bold;-webkit-text-stroke:0;transform:scaleX(0.8930);transform-origin:left center;">wready</span>
<span class="t" id="t107" style="top:436px;font-size:7.8px;color:#000;left:382.60px;font-weight:bold;-webkit-text-stroke:0;transform:scaleX(0.8665);transform-origin:left center;">bresp</span>
<span class="t" id="t109" style="top:449px;font-size:7.8px;color:#000;left:382.60px;font-weight:bold;-webkit-text-stroke:0;transform:scaleX(0.9054);transform-origin:left center;">bvalid</span>
<span class="t" id="t111" style="top:462px;font-size:7.8px;color:#000;left:382.60px;font-weight:bold;-webkit-text-stroke:0;transform:scaleX(0.9011);transform-origin:left center;">arready</span>
<span class="t" id="t124" style="top:338px;font-size:9.4px;color:#000;left:576.00px;transform:scaleX(0.9457);transform-origin:left center;">bridgesToMaster:</span>
<span class="t" id="t125" style="top:233px;font-size:9.4px;color:#000;left:709.90px;transform:scaleX(0.9143);transform-origin:left center;">axi_clk</span>
<span class="t" id="t126" style="top:251px;font-size:9.4px;color:#000;left:709.90px;transform:scaleX(0.9725);transform-origin:left center;">axi_reset</span>
</div>
<div class="tl" style="will-change:transform;transform:matrix(1,0,0.00001,1,0,0.5);transform-origin:0 0">
<span class="t" id="t0" style="top:6px;font-size:10.4px;color:#000;left:24.75px;transform:scaleX(0.9428);transform-origin:left center;">Component Editor - led_count_ip_hw.tcl*</span>
<span class="t" id="t10" style="top:70px;font-size:9.4px;color:#000;left:28.00px;transform:scaleX(0.9160);transform-origin:left center;">About Signals</span>
<span class="t" id="t12" style="top:118px;font-size:9.4px;color:#000;left:29.50px;font-weight:bold;transform:scaleX(1.0310);transform-origin:left center;">axi_clk</span>
<span class="t" id="t13" style="top:118px;font-size:9.4px;color:#8c8c8c;left:64.55px;font-style:italic;transform:scaleX(0.9434);transform-origin:left center;">Clock Input</span>
<span class="t" id="t14" style="top:131px;font-size:9.4px;color:#000;left:43.75px;transform:scaleX(0.9084);transform-origin:left center;">AXI4_Lite_ACLK [1]</span>
<span class="t" id="t15" style="top:131px;font-size:9.4px;color:#8c8c8c;left:123.50px;font-style:italic;transform:scaleX(0.8458);transform-origin:left center;">clk</span>
<span class="t" id="t16" style="top:144px;font-size:9.4px;color:#000;left:29.50px;font-weight:bold;transform:scaleX(1.0695);transform-origin:left center;">axi_reset</span>
<span class="t" id="t17" style="top:144px;font-size:9.4px;color:#8c8c8c;left:75.80px;font-style:italic;transform:scaleX(0.9749);transform-origin:left center;">Reset Input</span>
<span class="t" id="t38" style="top:301px;font-size:9.4px;color:#000;left:43.75px;transform:scaleX(0.9230);transform-origin:left center;">AXI4_Lite_AWADDR [16]</span>
<span class="t" id="t39" style="top:301px;font-size:9.4px;color:#8c8c8c;left:144.50px;font-style:italic;transform:scaleX(0.9350);transform-origin:left center;">awaddr</span>
<span class="t" id="t40" style="top:314px;font-size:9.4px;color:#000;left:43.75px;transform:scaleX(0.9099);transform-origin:left center;">AXI4_Lite_AWREADY [1]</span>
<span class="t" id="t41" style="top:314px;font-size:9.4px;color:#8c8c8c;left:143.75px;font-style:italic;transform:scaleX(0.9665);transform-origin:left center;">awready</span>
<span class="t" id="t42" style="top:327px;font-size:9.4px;color:#000;left:43.75px;transform:scaleX(0.9319);transform-origin:left center;">AXI4_Lite_AWVALID [1]</span>
<span class="t" id="t43" style="top:327px;font-size:9.4px;color:#8c8c8c;left:140.75px;font-style:italic;transform:scaleX(0.9355);transform-origin:left center;">awvalid</span>
<span class="t" id="t44" style="top:340px;font-size:9.4px;color:#000;left:43.75px;transform:scaleX(0.8943);transform-origin:left center;">AXI4_Lite_BREADY [1]</span>
<span class="t" id="t45" style="top:340px;font-size:9.4px;color:#8c8c8c;left:134.50px;font-style:italic;transform:scaleX(0.9766);transform-origin:left center;">bready</span>
<span class="t" id="t80" style="top:216px;font-size:9.4px;color:#000;left:580.00px;font-weight:bold;transform:scaleX(1.0768);transform-origin:left center;">Parameters</span>
<span class="t" id="t82" style="top:273px;font-size:10.2px;color:#111;left:355.00px;transform:scaleX(0.9875);transform-origin:left center;">s_axi</span>
<span class="t" id="t83" style="top:520px;font-size:8.2px;color:#1f9293;left:534.00px;transform:scaleX(0.9020);transform-origin:left center;">null</span>
<span class="t" id="t102" style="top:404px;font-size:8.9px;color:#000;left:264.60px;transform:scaleX(0.9617);transform-origin:left center;">AXI4_Lite_AWREADY</span>
<span class="t" id="t104" style="top:417px;font-size:8.9px;color:#000;left:264.60px;transform:scaleX(0.9467);transform-origin:left center;">AXI4_Lite_WREADY</span>
<span class="t" id="t106" style="top:430px;font-size:8.9px;color:#000;left:264.60px;transform:scaleX(0.9437);transform-origin:left center;">AXI4_Lite_BRESP[1..0]</span>
<span class="t" id="t108" style="top:443px;font-size:8.9px;color:#000;left:264.60px;transform:scaleX(0.9685);transform-origin:left center;">AXI4_Lite_BVALID</span>
<span class="t" id="t110" style="top:456px;font-size:8.9px;color:#000;left:264.60px;transform:scaleX(0.9545);transform-origin:left center;">AXI4_Lite_ARREADY</span>
<span class="t" id="t112" style="top:469px;font-size:8.9px;color:#000;left:264.60px;transform:scaleX(0.9808);transform-origin:left center;">AXI4_Lite_RDATA[31..0]</span>
<span class="t" id="t113" style="top:475px;font-size:7.8px;color:#000;left:382.60px;font-weight:bold;-webkit-text-stroke:0;transform:scaleX(0.8596);transform-origin:left center;">rdata</span>
<span class="t" id="t115" style="top:488px;font-size:7.8px;color:#000;left:382.60px;font-weight:bold;-webkit-text-stroke:0;transform:scaleX(0.8403);transform-origin:left center;">rresp</span>
<span class="t" id="t117" style="top:501px;font-size:7.8px;color:#000;left:382.60px;font-weight:bold;-webkit-text-stroke:0;transform:scaleX(0.8841);transform-origin:left center;">rvalid</span>
<span class="t" id="t123" style="top:320px;font-size:9.4px;color:#000;left:576.00px;transform:scaleX(0.9550);transform-origin:left center;">Read data reordering depth:</span>
</div>
<div class="tl" style="will-change:transform;transform:matrix(1,0,0.00001,1,0,0.75);transform-origin:0 0">
<span class="t" id="t5" style="top:48px;font-size:9.4px;color:#000;left:13.50px;transform:scaleX(0.9335);transform-origin:left center;">Component Type</span>
<span class="t" id="t6" style="top:48px;font-size:9.4px;color:#000;left:116.00px;transform:scaleX(0.8803);transform-origin:left center;">Block Symbol</span>
<span class="t" id="t7" style="top:48px;font-size:9.4px;color:#000;left:201.50px;transform:scaleX(0.8840);transform-origin:left center;">Files</span>
<span class="t" id="t8" style="top:48px;font-size:9.4px;color:#000;left:254.50px;transform:scaleX(0.9284);transform-origin:left center;">Parameters</span>
<span class="t" id="t9" style="top:48px;font-size:9.4px;color:#000;left:335.00px;transform:scaleX(0.9473);transform-origin:left center;">Signals &amp; Interfaces</span>
<span class="t" id="t11" style="top:101px;font-size:9.4px;color:#000;left:18.00px;transform:scaleX(0.8794);transform-origin:left center;">Name</span>
<span class="t" id="t18" style="top:157px;font-size:9.4px;color:#000;left:43.75px;transform:scaleX(0.8964);transform-origin:left center;">AXI4_Lite_ARESETN [1]</span>
<span class="t" id="t19" style="top:157px;font-size:9.4px;color:#8c8c8c;left:139.25px;font-style:italic;transform:scaleX(0.9670);transform-origin:left center;">reset_n</span>
<span class="t" id="t20" style="top:170px;font-size:9.4px;color:#8c8c8c;left:29.25px;font-style:italic;transform:scaleX(0.9860);transform-origin:left center;">&lt;&lt;add signal&gt;&gt;</span>
<span class="t" id="t21" style="top:183px;font-size:9.4px;color:#000;left:29.50px;font-weight:bold;transform:scaleX(1.0065);transform-origin:left center;">ip_clk</span>
<span class="t" id="t22" style="top:183px;font-size:9.4px;color:#8c8c8c;left:59.05px;font-style:italic;transform:scaleX(0.9380);transform-origin:left center;">Clock Input</span>
<span class="t" id="t23" style="top:196px;font-size:9.4px;color:#000;left:43.75px;transform:scaleX(0.8801);transform-origin:left center;">IPCORE_CLK [1]</span>
<span class="t" id="t24" style="top:196px;font-size:9.4px;color:#8c8c8c;left:110.75px;font-style:italic;transform:scaleX(0.8719);transform-origin:left center;">clk</span>
<span class="t" id="t46" style="top:353px;font-size:9.4px;color:#000;left:43.75px;transform:scaleX(0.8893);transform-origin:left center;">AXI4_Lite_BRESP [2]</span>
<span class="t" id="t47" style="top:353px;font-size:9.4px;color:#8c8c8c;left:127.50px;font-style:italic;transform:scaleX(0.9594);transform-origin:left center;">bresp</span>
<span class="t" id="t48" style="top:366px;font-size:9.4px;color:#000;left:43.75px;transform:scaleX(0.9147);transform-origin:left center;">AXI4_Lite_BVALID [1]</span>
<span class="t" id="t49" style="top:366px;font-size:9.4px;color:#8c8c8c;left:131.25px;font-style:italic;transform:scaleX(0.9490);transform-origin:left center;">bvalid</span>
<span class="t" id="t50" style="top:379px;font-size:9.4px;color:#000;left:43.75px;transform:scaleX(0.9363);transform-origin:left center;">AXI4_Lite_RDATA [32]</span>
<span class="t" id="t51" style="top:379px;font-size:9.4px;color:#8c8c8c;left:135.00px;font-style:italic;transform:scaleX(0.9941);transform-origin:left center;">rdata</span>
<span class="t" id="t52" style="top:392px;font-size:9.4px;color:#000;left:43.75px;transform:scaleX(0.8998);transform-origin:left center;">AXI4_Lite_RREADY [1]</span>
<span class="t" id="t53" style="top:392px;font-size:9.4px;color:#8c8c8c;left:135.00px;font-style:italic;transform:scaleX(1.0159);transform-origin:left center;">rready</span>
<span class="t" id="t71" style="top:163px;font-size:9.4px;color:#000;left:252.00px;transform:scaleX(0.9264);transform-origin:left center;">Associated Reset:</span>
<span class="t" id="t72" style="top:184px;font-size:9.4px;color:#000;left:252.00px;transform:scaleX(0.9062);transform-origin:left center;">Assignments:</span>
<span class="t" id="t75" style="top:143px;font-size:9.4px;color:#000;left:329.00px;transform:scaleX(0.9248);transform-origin:left center;">axi_clk</span>
<span class="t" id="t76" style="top:163px;font-size:9.4px;color:#000;left:329.00px;transform:scaleX(0.9725);transform-origin:left center;">axi_reset</span>
<span class="t" id="t79" style="top:217px;font-size:9.4px;color:#000;left:258.75px;font-weight:bold;transform:scaleX(1.0052);transform-origin:left center;">Block Diagram</span>
<span class="t" id="t85" style="top:292px;font-size:7.8px;color:#000;left:382.60px;font-weight:bold;-webkit-text-stroke:0;transform:scaleX(0.8572);transform-origin:left center;">awaddr</span>
<span class="t" id="t114" style="top:482px;font-size:8.9px;color:#000;left:264.60px;transform:scaleX(0.9388);transform-origin:left center;">AXI4_Lite_RRESP[1..0]</span>
<span class="t" id="t116" style="top:495px;font-size:8.9px;color:#000;left:264.60px;transform:scaleX(0.9642);transform-origin:left center;">AXI4_Lite_RVALID</span>
<span class="t" id="t118" style="top:230px;font-size:9.4px;color:#000;left:576.00px;transform:scaleX(0.9180);transform-origin:left center;">Associated clock:</span>
<span class="t" id="t119" style="top:248px;font-size:9.4px;color:#000;left:576.00px;transform:scaleX(0.9385);transform-origin:left center;">Associated reset:</span>
<span class="t" id="t120" style="top:266px;font-size:9.4px;color:#000;left:576.00px;transform:scaleX(0.9338);transform-origin:left center;">Read acceptance capability:</span>
<span class="t" id="t121" style="top:284px;font-size:9.4px;color:#000;left:576.00px;transform:scaleX(0.9480);transform-origin:left center;">Write acceptance capability:</span>
<span class="t" id="t122" style="top:302px;font-size:9.4px;color:#000;left:576.00px;transform:scaleX(0.9266);transform-origin:left center;">Combined acceptance capability:</span>
<span class="t" id="t131" style="top:340px;font-size:9.4px;color:#000;left:710.60px;font-style:italic;transform:scaleX(0.9348);transform-origin:left center;">none</span>
<span class="t" id="t132" style="top:606px;font-size:9.4px;color:#000;left:13.50px;transform:scaleX(0.9009);transform-origin:left center;">Messages</span>
<span class="t" id="t133" style="top:625px;font-size:9.4px;color:#000;left:24.60px;transform:scaleX(0.9600);transform-origin:left center;">Error:</span>
<span class="t" id="t134" style="top:625px;font-size:9.4px;color:#000;left:50.50px;font-weight:bold;transform:scaleX(1.0153);transform-origin:left center;">s_axi:</span>
<span class="t" id="t135" style="top:625px;font-size:9.4px;color:#000;left:80.50px;transform:scaleX(0.9139);transform-origin:left center;">Missing required signal(s):</span>
<span class="t" id="t136" style="top:625px;font-size:9.4px;color:#000;left:184.50px;font-weight:bold;transform:scaleX(1.0630);transform-origin:left center;">awprot, arprot</span>
<span class="t" id="t137" style="top:775px;font-size:9.4px;color:#000;left:381.50px;transform:scaleX(0.9076);transform-origin:left center;">Help</span>
<span class="t" id="t138" style="top:775px;font-size:9.4px;color:#000;left:457.00px;transform:scaleX(0.9335);transform-origin:left center;">Prev</span>
<span class="t" id="t139" style="top:775px;font-size:9.4px;color:#000;left:506.00px;transform:scaleX(1.0113);transform-origin:left center;">Next</span>
<span class="t" id="t140" style="top:775px;font-size:9.4px;color:#000;left:583.50px;transform:scaleX(0.9900);transform-origin:left center;">Finish...</span>
</div>
<div class="a" style="left:0px;top:0px;width:999px;height:802px;border:1px solid #757575;box-sizing:border-box;pointer-events:none;"></div>
<div class="a" style="left:1px;top:800px;width:997px;height:1px;background:#fafafa;"></div>
<div class="a" style="left:997px;top:1px;width:1px;height:800px;background:#fafafa;"></div>
</div>
</body></html>
